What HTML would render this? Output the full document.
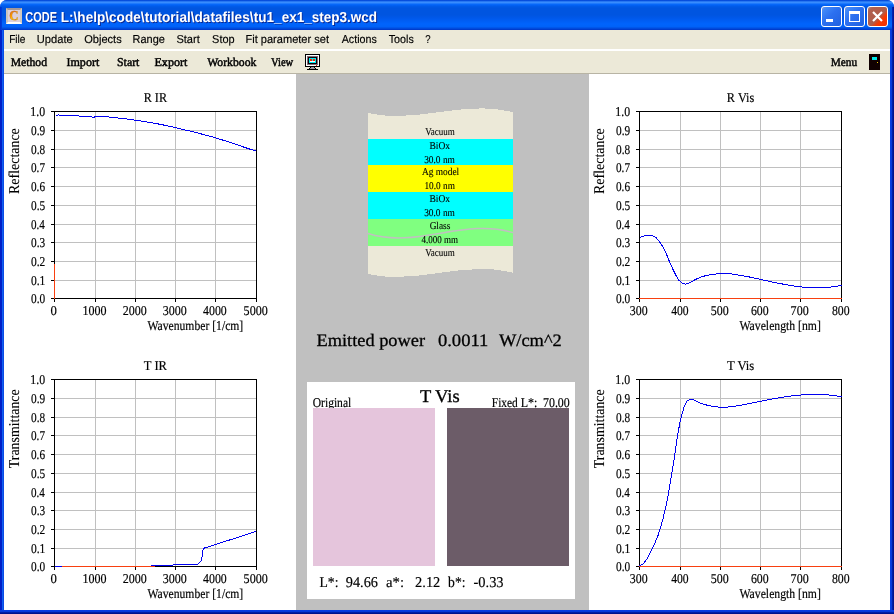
<!DOCTYPE html>
<html lang="en">
<head>
<meta charset="utf-8">
<title>CODE L:\help\code\tutorial\datafiles\tu1_ex1_step3.wcd</title>
<style>
html,body{margin:0;padding:0;}
body{width:894px;height:614px;overflow:hidden;background:#fff;position:relative;font-family:"Liberation Sans",sans-serif;}
#win{position:absolute;left:0;top:0;width:894px;height:614px;overflow:hidden;background:#0a3fe0;border-radius:7px 7px 0 0;}
#title{position:absolute;left:0;top:0;width:894px;height:30px;background:linear-gradient(to bottom,#0044d8 0px,#0a54e0 0.8px,#3c90ff 2px,#3488fc 3px,#0a6cfc 4px,#0262f6 5px,#005ae8 6.5px,#0055e0 8px,#0055e0 15px,#0058ea 18px,#005ef4 21px,#0064fc 24px,#0062f8 26.5px,#0052e4 28px,#0034c4 30px);}
#bl,#br{position:absolute;top:30px;width:4px;height:584px;}
#tl,#tr{position:absolute;top:7px;width:2px;height:23px;}
#tl{left:0;background:linear-gradient(to right,#0030d0,#0040dc);}
#tr{left:892px;background:linear-gradient(to right,#0428b8,#001490);}
#bl{left:0;background:linear-gradient(to right,#0020c8 0,#0020c8 1.5px,#1060f0 2.5px,#0840e0 4px);}
#br{left:890px;background:linear-gradient(to right,#0a3ee4 0,#0838d8 1.6px,#0420a8 2.4px,#000c80 4px);}
#bb{position:absolute;left:0;top:610px;width:894px;height:4px;background:linear-gradient(to bottom,#0a3ee4 0,#0838d8 1.6px,#0420a8 2.4px,#000c80 4px);}
#ticon{position:absolute;left:6px;top:8px;width:16px;height:16px;box-sizing:border-box;background:#dcd0dc;border:2px solid;border-color:#a49898 #d0c8c0 #fcfcfc #ccc4bc;}
.tb{position:absolute;top:6px;width:19px;height:19px;border:1px solid #fff;border-radius:3px;background:linear-gradient(135deg,#8098d8 0%,#4088f8 14%,#2c70f0 45%,#2060e0 100%);}
#bclose{background:linear-gradient(135deg,#a89088 0%,#b06050 14%,#b05c48 55%,#f83800 70%,#f03000 100%);}
.tb svg{position:absolute;left:-1px;top:-1px;}
#menubar{position:absolute;left:4px;top:30px;width:886px;height:19px;background:#ece9d8;}
#sep{position:absolute;left:4px;top:49px;width:886px;height:2px;background:#fff;}
#toolbar{position:absolute;left:4px;top:51px;width:886px;height:22px;background:#ece9d8;border-bottom:1px solid #b8b4a4;}
#content{position:absolute;left:4px;top:74px;width:886px;height:536px;background:#fff;}
#gray{position:absolute;left:296px;top:74px;width:293px;height:536px;background:#c0c0c0;}
#colorbox{position:absolute;left:307px;top:382px;width:268px;height:217px;background:#fff;}
.sw{position:absolute;top:408px;width:122px;height:158px;}
#ov{position:absolute;left:0;top:0;will-change:transform;}
.tt{text-shadow:1px 1px 0 #0a2890;}
</style>
</head>
<body>
<div id="win">
<div id="title"></div>
<div id="ticon"></div>
<div class="tb" id="bmin" style="left:821px"><svg width="21" height="21"><rect x="5" y="13" width="7" height="3" fill="#fff"/></svg></div>
<div class="tb" id="bmax" style="left:844px"><svg width="21" height="21"><path d="M5 5h11v11h-11z M6.200 8v7h8.800v-7z" fill="#fff" fill-rule="evenodd"/></svg></div>
<div class="tb" id="bclose" style="left:867px"><svg width="21" height="21"><path d="M6 6 L15 15 M15 6 L6 15" stroke="#fff" stroke-width="2.200" fill="none"/></svg></div>
<div id="tl"></div><div id="tr"></div><div id="bl"></div><div id="br"></div><div id="bb"></div>
<div id="menubar"></div>
<div id="sep"></div>
<div id="toolbar"></div>
<div id="content"></div>
<div id="gray"></div>
<div id="colorbox"></div>
<svg id="ov" width="894" height="614" viewBox="0 0 894 614" text-rendering="geometricPrecision">
<defs><linearGradient id="cg" x1="0" y1="0" x2="1" y2="1"><stop offset="0" stop-color="#b84820"/><stop offset="0.35" stop-color="#ffa000"/><stop offset="0.6" stop-color="#ffff00"/><stop offset="1" stop-color="#fff000"/></linearGradient></defs>
<text transform="translate(9.300,20.300) scale(0.95,1)" font-family="'Liberation Serif', serif" font-weight="bold" font-size="13.5px" fill="url(#cg)" stroke="#c86020" stroke-width="0.400">C</text>
<text transform="translate(25.36,22) scale(0.7559,1)" font-family="'Liberation Sans', sans-serif" font-weight="bold" font-size="14.5px" fill="#fff" xml:space="preserve" class="tt">CODE </text><text transform="translate(60.78,22) scale(0.9365,1)" font-family="'Liberation Sans', sans-serif" font-weight="bold" font-size="14.5px" fill="#fff" xml:space="preserve" class="tt">L:\help\code\</text><text transform="translate(144.63,22) scale(0.9386,1)" font-family="'Liberation Sans', sans-serif" font-weight="bold" font-size="14.5px" fill="#fff" xml:space="preserve" class="tt">tutorial\datafiles\</text><text transform="translate(253.83,22) scale(0.9325,1)" font-family="'Liberation Sans', sans-serif" font-weight="bold" font-size="14.5px" fill="#fff" xml:space="preserve" class="tt">tu1_ex1_step3.wcd</text>
<g id="menu"><text transform="translate(9.17,43) scale(0.8783,1)" font-family="'Liberation Sans', sans-serif" font-weight="normal" font-size="11.5px" fill="#000" stroke="#000" stroke-width="0.15" xml:space="preserve">File </text><text transform="translate(36.74,43) scale(0.9698,1)" font-family="'Liberation Sans', sans-serif" font-weight="normal" font-size="11.5px" fill="#000" stroke="#000" stroke-width="0.15" xml:space="preserve">Update </text><text transform="translate(84.17,43) scale(0.9622,1)" font-family="'Liberation Sans', sans-serif" font-weight="normal" font-size="11.5px" fill="#000" stroke="#000" stroke-width="0.15" xml:space="preserve">Objects </text><text transform="translate(132.60,43) scale(0.9528,1)" font-family="'Liberation Sans', sans-serif" font-weight="normal" font-size="11.5px" fill="#000" stroke="#000" stroke-width="0.15" xml:space="preserve">Range </text><text transform="translate(176.40,43) scale(0.9624,1)" font-family="'Liberation Sans', sans-serif" font-weight="normal" font-size="11.5px" fill="#000" stroke="#000" stroke-width="0.15" xml:space="preserve">Start </text><text transform="translate(212.11,43) scale(0.9490,1)" font-family="'Liberation Sans', sans-serif" font-weight="normal" font-size="11.5px" fill="#000" stroke="#000" stroke-width="0.15" xml:space="preserve">Stop </text><text transform="translate(245.49,43) scale(0.9607,1)" font-family="'Liberation Sans', sans-serif" font-weight="normal" font-size="11.5px" fill="#000" stroke="#000" stroke-width="0.15" xml:space="preserve">Fit parameter set </text><text transform="translate(341.67,43) scale(0.9306,1)" font-family="'Liberation Sans', sans-serif" font-weight="normal" font-size="11.5px" fill="#000" stroke="#000" stroke-width="0.15" xml:space="preserve">Actions </text><text transform="translate(388.76,43) scale(0.9316,1)" font-family="'Liberation Sans', sans-serif" font-weight="normal" font-size="11.5px" fill="#000" stroke="#000" stroke-width="0.15" xml:space="preserve">Tools </text><text transform="translate(425.22,43) scale(0.8333,1)" font-family="'Liberation Sans', sans-serif" font-weight="normal" font-size="11.5px" fill="#000" stroke="#000" stroke-width="0.15" xml:space="preserve">? </text></g>
<g id="tools"><text transform="translate(10.68,66) scale(0.9745,1)" font-family="'Liberation Serif', serif" font-weight="normal" font-size="12px" fill="#000" stroke="#000" stroke-width="0.45" xml:space="preserve">Method </text><text transform="translate(66.48,66) scale(1.0034,1)" font-family="'Liberation Serif', serif" font-weight="normal" font-size="12px" fill="#000" stroke="#000" stroke-width="0.45" xml:space="preserve">Import </text><text transform="translate(117.00,66) scale(0.9871,1)" font-family="'Liberation Serif', serif" font-weight="normal" font-size="12px" fill="#000" stroke="#000" stroke-width="0.45" xml:space="preserve">Start </text><text transform="translate(154.47,66) scale(1.0099,1)" font-family="'Liberation Serif', serif" font-weight="normal" font-size="12px" fill="#000" stroke="#000" stroke-width="0.45" xml:space="preserve">Export </text><text transform="translate(207.20,66) scale(0.9768,1)" font-family="'Liberation Serif', serif" font-weight="normal" font-size="12px" fill="#000" stroke="#000" stroke-width="0.45" xml:space="preserve">Workbook </text><text transform="translate(270.99,66) scale(0.8801,1)" font-family="'Liberation Serif', serif" font-weight="normal" font-size="12px" fill="#000" stroke="#000" stroke-width="0.45" xml:space="preserve">View </text><text transform="translate(830.69,66) scale(0.9472,1)" font-family="'Liberation Serif', serif" font-weight="normal" font-size="12px" fill="#000" stroke="#000" stroke-width="0.45" xml:space="preserve">Menu </text></g>
<g shape-rendering="crispEdges">
<rect x="305" y="54" width="15" height="13" fill="#000"/>
<rect x="306" y="55" width="13" height="11" fill="#fff"/>
<rect x="307" y="56" width="11" height="9" fill="#807078"/>
<rect x="308" y="57" width="9" height="7" fill="#100008"/>
<rect x="309" y="58" width="7" height="5" fill="#00f0f0"/>
<rect x="310" y="59" width="2" height="2" fill="#ff2000"/><rect x="313" y="59" width="2" height="2" fill="#ff2000"/>
<rect x="310" y="61" width="5" height="1" fill="#fff"/>
<rect x="307" y="65" width="11" height="1" fill="#fff"/>
<rect x="316" y="65" width="1" height="1" fill="#ff2000"/>
<rect x="310" y="67" width="5" height="1" fill="#000"/><rect x="311" y="67" width="3" height="1" fill="#a098a0"/>
<rect x="309" y="68" width="7" height="1" fill="#000"/><rect x="310" y="68" width="5" height="1" fill="#a098a0"/>
<rect x="307" y="69" width="11" height="1" fill="#000"/>
<rect x="869" y="54" width="11" height="16" fill="#100000"/>
<rect x="872" y="57" width="5" height="3" fill="#00e8e8"/>
<rect x="877" y="62" width="1" height="1" fill="#e8c800"/>
</g>
<g shape-rendering="crispEdges">
<path d="M368 113 C416.300 124.500 464.700 99 513 112.300 V139 H368 Z" fill="#ece9d8"/>
<rect x="368" y="139" width="145" height="26" fill="#00ffff"/>
<rect x="368" y="165" width="145" height="27" fill="#ffff00"/>
<rect x="368" y="192" width="145" height="27" fill="#00ffff"/>
<rect x="368" y="219" width="145" height="27" fill="#80ff80"/>
<path d="M368 246 H513 V272.800 C464.700 259.500 416.300 285.500 368 274 Z" fill="#ece9d8"/>
</g>
<path d="M368 233.500 C416.300 249 464.700 217.500 513 232.600" fill="none" stroke="#c0c0c0" stroke-width="1.500"/>
<g id="layers"><text transform="translate(425.21,135) scale(0.8550,1)" font-family="'Liberation Serif', serif" font-weight="normal" font-size="10.5px" fill="#000" stroke="#000" stroke-width="0.1" xml:space="preserve">Vacuum</text><text transform="translate(429.54,149) scale(0.9043,1)" font-family="'Liberation Serif', serif" font-weight="normal" font-size="10.5px" fill="#000" stroke="#000" stroke-width="0.1" xml:space="preserve">BiOx</text><text transform="translate(424.16,163) scale(0.8917,1)" font-family="'Liberation Serif', serif" font-weight="normal" font-size="10.5px" fill="#000" stroke="#000" stroke-width="0.1" xml:space="preserve">30.0 nm</text><text transform="translate(421.91,175) scale(0.8938,1)" font-family="'Liberation Serif', serif" font-weight="normal" font-size="10.5px" fill="#000" stroke="#000" stroke-width="0.1" xml:space="preserve">Ag model</text><text transform="translate(424.49,189) scale(0.8819,1)" font-family="'Liberation Serif', serif" font-weight="normal" font-size="10.5px" fill="#000" stroke="#000" stroke-width="0.1" xml:space="preserve">10.0 nm</text><text transform="translate(429.54,202) scale(0.9043,1)" font-family="'Liberation Serif', serif" font-weight="normal" font-size="10.5px" fill="#000" stroke="#000" stroke-width="0.1" xml:space="preserve">BiOx</text><text transform="translate(424.16,216) scale(0.8917,1)" font-family="'Liberation Serif', serif" font-weight="normal" font-size="10.5px" fill="#000" stroke="#000" stroke-width="0.1" xml:space="preserve">30.0 nm</text><text transform="translate(429.63,229) scale(0.8880,1)" font-family="'Liberation Serif', serif" font-weight="normal" font-size="10.5px" fill="#000" stroke="#000" stroke-width="0.1" xml:space="preserve">Glass</text><text transform="translate(421.52,243) scale(0.8576,1)" font-family="'Liberation Serif', serif" font-weight="normal" font-size="10.5px" fill="#000" stroke="#000" stroke-width="0.1" xml:space="preserve">4.000 mm</text><text transform="translate(425.21,256) scale(0.8550,1)" font-family="'Liberation Serif', serif" font-weight="normal" font-size="10.5px" fill="#000" stroke="#000" stroke-width="0.1" xml:space="preserve">Vacuum</text></g>
<g id="center"><text transform="translate(316.50,345.7) scale(1.0486,1)" font-family="'Liberation Serif', serif" font-weight="normal" font-size="17.5px" fill="#000" stroke="#000" stroke-width="0.3" xml:space="preserve">Emitted power   </text><text transform="translate(437.90,345.7) scale(1.0620,1)" font-family="'Liberation Serif', serif" font-weight="normal" font-size="17.5px" fill="#000" stroke="#000" stroke-width="0.3" xml:space="preserve">0.0011   </text><text transform="translate(498.90,345.7) scale(1.0535,1)" font-family="'Liberation Serif', serif" font-weight="normal" font-size="17.5px" fill="#000" stroke="#000" stroke-width="0.3" xml:space="preserve">W/cm^2</text><text transform="translate(419.88,402) scale(1.0265,1)" font-family="'Liberation Serif', serif" font-weight="normal" font-size="18px" fill="#000" stroke="#000" stroke-width="0.3" xml:space="preserve">T Vis</text><text transform="translate(312.74,407) scale(0.8556,1)" font-family="'Liberation Serif', serif" font-weight="normal" font-size="13.5px" fill="#000" stroke="#000" stroke-width="0.18" xml:space="preserve">Original</text><text transform="translate(491.79,407) scale(0.8442,1)" font-family="'Liberation Serif', serif" font-weight="normal" font-size="13.5px" fill="#000" stroke="#000" stroke-width="0.18" xml:space="preserve">Fixed </text><text transform="translate(520.67,407) scale(0.8912,1)" font-family="'Liberation Serif', serif" font-weight="normal" font-size="13.5px" fill="#000" stroke="#000" stroke-width="0.18" xml:space="preserve">L*:  </text><text transform="translate(543.03,407) scale(0.8796,1)" font-family="'Liberation Serif', serif" font-weight="normal" font-size="13.5px" fill="#000" stroke="#000" stroke-width="0.18" xml:space="preserve">70.00</text><text transform="translate(319.52,587) scale(0.9115,1)" font-family="'Liberation Serif', serif" font-weight="normal" font-size="15px" fill="#000" stroke="#000" stroke-width="0.18" xml:space="preserve">L*:  </text><text transform="translate(345.84,587) scale(0.9509,1)" font-family="'Liberation Serif', serif" font-weight="normal" font-size="15px" fill="#000" stroke="#000" stroke-width="0.18" xml:space="preserve">94.66  </text><text transform="translate(386.08,587) scale(0.9812,1)" font-family="'Liberation Serif', serif" font-weight="normal" font-size="15px" fill="#000" stroke="#000" stroke-width="0.18" xml:space="preserve">a*:   </text><text transform="translate(415.09,587) scale(0.9602,1)" font-family="'Liberation Serif', serif" font-weight="normal" font-size="15px" fill="#000" stroke="#000" stroke-width="0.18" xml:space="preserve">2.12  </text><text transform="translate(448.10,587) scale(0.9074,1)" font-family="'Liberation Serif', serif" font-weight="normal" font-size="15px" fill="#000" stroke="#000" stroke-width="0.18" xml:space="preserve">b*:  </text><text transform="translate(473.46,587) scale(0.9643,1)" font-family="'Liberation Serif', serif" font-weight="normal" font-size="15px" fill="#000" stroke="#000" stroke-width="0.18" xml:space="preserve">-0.33</text></g>
<g shape-rendering="crispEdges"><rect x="313" y="408" width="122" height="158" fill="#e5c5dc"/><rect x="447" y="408" width="122" height="158" fill="#6c5c68"/></g>
<g fill="#c0c0c0" shape-rendering="crispEdges"><rect x="95" y="112" width="1" height="186"/><rect x="135" y="112" width="1" height="186"/><rect x="175" y="112" width="1" height="186"/><rect x="215" y="112" width="1" height="186"/><rect x="55" y="280" width="201" height="1"/><rect x="55" y="261" width="201" height="1"/><rect x="55" y="242" width="201" height="1"/><rect x="55" y="224" width="201" height="1"/><rect x="55" y="205" width="201" height="1"/><rect x="55" y="186" width="201" height="1"/><rect x="55" y="167" width="201" height="1"/><rect x="55" y="149" width="201" height="1"/><rect x="55" y="130" width="201" height="1"/></g>
<g fill="#000" shape-rendering="crispEdges"><path d="M54 111h203v188h-203z M55 112v186h201v-186z" fill-rule="evenodd"/><rect x="54" y="299" width="1" height="3"/><rect x="95" y="299" width="1" height="3"/><rect x="135" y="299" width="1" height="3"/><rect x="175" y="299" width="1" height="3"/><rect x="215" y="299" width="1" height="3"/><rect x="256" y="299" width="1" height="3"/><rect x="51" y="298" width="3" height="1"/><rect x="51" y="280" width="3" height="1"/><rect x="51" y="261" width="3" height="1"/><rect x="51" y="242" width="3" height="1"/><rect x="51" y="224" width="3" height="1"/><rect x="51" y="205" width="3" height="1"/><rect x="51" y="186" width="3" height="1"/><rect x="51" y="167" width="3" height="1"/><rect x="51" y="149" width="3" height="1"/><rect x="51" y="130" width="3" height="1"/><rect x="51" y="111" width="3" height="1"/></g>
<polyline fill="none" stroke="#f84010" stroke-width="1" stroke-linejoin="round" shape-rendering="crispEdges" points="54.5,264.0 54.5,298.5"/>
<polyline fill="none" stroke="#0000f0" stroke-width="1" stroke-linejoin="round" shape-rendering="crispEdges" points="56.0,115.5 57.5,115.3 58.6,114.5 59.6,115.3 61.0,115.6 78.5,115.7 80.0,116.4 91.0,116.5 92.3,117.4 94.0,117.4 95.3,116.5 105.0,116.6 115.0,117.6 125.0,118.8 135.0,120.1 145.0,121.6 155.0,123.3 165.0,125.3 175.0,127.5 185.0,129.9 195.0,132.3 205.0,134.9 215.5,137.8 225.0,140.8 235.0,144.1 245.0,147.5 256.3,151.2"/>
<g><text transform="translate(50.62,314.8) scale(0.9412,1)" font-family="'Liberation Serif', serif" font-weight="normal" font-size="13.5px" fill="#000" stroke="#000" stroke-width="0.18" xml:space="preserve">0</text><text transform="translate(82.45,314.8) scale(0.8928,1)" font-family="'Liberation Serif', serif" font-weight="normal" font-size="13.5px" fill="#000" stroke="#000" stroke-width="0.18" xml:space="preserve">1000</text><text transform="translate(122.79,314.8) scale(0.8873,1)" font-family="'Liberation Serif', serif" font-weight="normal" font-size="13.5px" fill="#000" stroke="#000" stroke-width="0.18" xml:space="preserve">2000</text><text transform="translate(162.73,314.8) scale(0.8897,1)" font-family="'Liberation Serif', serif" font-weight="normal" font-size="13.5px" fill="#000" stroke="#000" stroke-width="0.18" xml:space="preserve">3000</text><text transform="translate(203.06,314.8) scale(0.8771,1)" font-family="'Liberation Serif', serif" font-weight="normal" font-size="13.5px" fill="#000" stroke="#000" stroke-width="0.18" xml:space="preserve">4000</text><text transform="translate(243.61,314.8) scale(0.8943,1)" font-family="'Liberation Serif', serif" font-weight="normal" font-size="13.5px" fill="#000" stroke="#000" stroke-width="0.18" xml:space="preserve">5000</text><text transform="translate(30.98,302.7) scale(0.8385,1)" font-family="'Liberation Serif', serif" font-weight="normal" font-size="13.5px" fill="#000" stroke="#000" stroke-width="0.18" xml:space="preserve">0.0</text><text transform="translate(30.97,284.7) scale(0.8548,1)" font-family="'Liberation Serif', serif" font-weight="normal" font-size="13.5px" fill="#000" stroke="#000" stroke-width="0.18" xml:space="preserve">0.1</text><text transform="translate(30.97,265.7) scale(0.8511,1)" font-family="'Liberation Serif', serif" font-weight="normal" font-size="13.5px" fill="#000" stroke="#000" stroke-width="0.18" xml:space="preserve">0.2</text><text transform="translate(30.97,246.7) scale(0.8402,1)" font-family="'Liberation Serif', serif" font-weight="normal" font-size="13.5px" fill="#000" stroke="#000" stroke-width="0.18" xml:space="preserve">0.3</text><text transform="translate(30.98,228.7) scale(0.8227,1)" font-family="'Liberation Serif', serif" font-weight="normal" font-size="13.5px" fill="#000" stroke="#000" stroke-width="0.18" xml:space="preserve">0.4</text><text transform="translate(30.97,209.7) scale(0.8402,1)" font-family="'Liberation Serif', serif" font-weight="normal" font-size="13.5px" fill="#000" stroke="#000" stroke-width="0.18" xml:space="preserve">0.5</text><text transform="translate(30.98,190.7) scale(0.8331,1)" font-family="'Liberation Serif', serif" font-weight="normal" font-size="13.5px" fill="#000" stroke="#000" stroke-width="0.18" xml:space="preserve">0.6</text><text transform="translate(30.98,171.7) scale(0.8314,1)" font-family="'Liberation Serif', serif" font-weight="normal" font-size="13.5px" fill="#000" stroke="#000" stroke-width="0.18" xml:space="preserve">0.7</text><text transform="translate(30.98,153.7) scale(0.8385,1)" font-family="'Liberation Serif', serif" font-weight="normal" font-size="13.5px" fill="#000" stroke="#000" stroke-width="0.18" xml:space="preserve">0.8</text><text transform="translate(30.97,134.7) scale(0.8402,1)" font-family="'Liberation Serif', serif" font-weight="normal" font-size="13.5px" fill="#000" stroke="#000" stroke-width="0.18" xml:space="preserve">0.9</text><text transform="translate(30.37,115.7) scale(0.8757,1)" font-family="'Liberation Serif', serif" font-weight="normal" font-size="13.5px" fill="#000" stroke="#000" stroke-width="0.18" xml:space="preserve">1.0</text><text transform="translate(147.50,330) scale(0.8625,1)" font-family="'Liberation Serif', serif" font-weight="normal" font-size="13.5px" fill="#000" stroke="#000" stroke-width="0.18" xml:space="preserve">Wavenumber [1/cm]</text><text transform="translate(143.66,102) scale(0.9026,1)" font-family="'Liberation Serif', serif" font-weight="normal" font-size="13.5px" fill="#000" stroke="#000" stroke-width="0.18" xml:space="preserve">R IR</text><text transform="translate(19.4,193.98) rotate(-90) scale(0.9290,1)" font-family="'Liberation Serif', serif" font-size="15px" fill="#000" stroke="#000" stroke-width="0.1">Reflectance</text></g>
<g fill="#c0c0c0" shape-rendering="crispEdges"><rect x="95" y="380" width="1" height="186"/><rect x="135" y="380" width="1" height="186"/><rect x="175" y="380" width="1" height="186"/><rect x="215" y="380" width="1" height="186"/><rect x="55" y="548" width="201" height="1"/><rect x="55" y="529" width="201" height="1"/><rect x="55" y="510" width="201" height="1"/><rect x="55" y="492" width="201" height="1"/><rect x="55" y="473" width="201" height="1"/><rect x="55" y="454" width="201" height="1"/><rect x="55" y="435" width="201" height="1"/><rect x="55" y="417" width="201" height="1"/><rect x="55" y="398" width="201" height="1"/></g>
<g fill="#000" shape-rendering="crispEdges"><path d="M54 379h203v188h-203z M55 380v186h201v-186z" fill-rule="evenodd"/><rect x="54" y="567" width="1" height="3"/><rect x="95" y="567" width="1" height="3"/><rect x="135" y="567" width="1" height="3"/><rect x="175" y="567" width="1" height="3"/><rect x="215" y="567" width="1" height="3"/><rect x="256" y="567" width="1" height="3"/><rect x="51" y="566" width="3" height="1"/><rect x="51" y="548" width="3" height="1"/><rect x="51" y="529" width="3" height="1"/><rect x="51" y="510" width="3" height="1"/><rect x="51" y="492" width="3" height="1"/><rect x="51" y="473" width="3" height="1"/><rect x="51" y="454" width="3" height="1"/><rect x="51" y="435" width="3" height="1"/><rect x="51" y="417" width="3" height="1"/><rect x="51" y="398" width="3" height="1"/><rect x="51" y="379" width="3" height="1"/></g>
<polyline fill="none" stroke="#f84010" stroke-width="1" stroke-linejoin="round" shape-rendering="crispEdges" points="62.0,566.5 154.5,566.5"/>
<polyline fill="none" stroke="#0000f0" stroke-width="1" stroke-linejoin="round" shape-rendering="crispEdges" points="55.0,566.5 62.0,566.5"/>
<polyline fill="none" stroke="#0000f0" stroke-width="1" stroke-linejoin="round" shape-rendering="crispEdges" points="151.0,565.5 172.5,565.5 173.5,564.5 197.5,564.5 199.7,562.5 201.5,560.8 202.2,555.5 203.1,549.0 204.6,548.0 256.3,531.4"/>
<g><text transform="translate(50.62,582.8) scale(0.9412,1)" font-family="'Liberation Serif', serif" font-weight="normal" font-size="13.5px" fill="#000" stroke="#000" stroke-width="0.18" xml:space="preserve">0</text><text transform="translate(82.45,582.8) scale(0.8928,1)" font-family="'Liberation Serif', serif" font-weight="normal" font-size="13.5px" fill="#000" stroke="#000" stroke-width="0.18" xml:space="preserve">1000</text><text transform="translate(122.79,582.8) scale(0.8873,1)" font-family="'Liberation Serif', serif" font-weight="normal" font-size="13.5px" fill="#000" stroke="#000" stroke-width="0.18" xml:space="preserve">2000</text><text transform="translate(162.73,582.8) scale(0.8897,1)" font-family="'Liberation Serif', serif" font-weight="normal" font-size="13.5px" fill="#000" stroke="#000" stroke-width="0.18" xml:space="preserve">3000</text><text transform="translate(203.06,582.8) scale(0.8771,1)" font-family="'Liberation Serif', serif" font-weight="normal" font-size="13.5px" fill="#000" stroke="#000" stroke-width="0.18" xml:space="preserve">4000</text><text transform="translate(243.61,582.8) scale(0.8943,1)" font-family="'Liberation Serif', serif" font-weight="normal" font-size="13.5px" fill="#000" stroke="#000" stroke-width="0.18" xml:space="preserve">5000</text><text transform="translate(30.98,570.7) scale(0.8385,1)" font-family="'Liberation Serif', serif" font-weight="normal" font-size="13.5px" fill="#000" stroke="#000" stroke-width="0.18" xml:space="preserve">0.0</text><text transform="translate(30.97,552.7) scale(0.8548,1)" font-family="'Liberation Serif', serif" font-weight="normal" font-size="13.5px" fill="#000" stroke="#000" stroke-width="0.18" xml:space="preserve">0.1</text><text transform="translate(30.97,533.7) scale(0.8511,1)" font-family="'Liberation Serif', serif" font-weight="normal" font-size="13.5px" fill="#000" stroke="#000" stroke-width="0.18" xml:space="preserve">0.2</text><text transform="translate(30.97,514.7) scale(0.8402,1)" font-family="'Liberation Serif', serif" font-weight="normal" font-size="13.5px" fill="#000" stroke="#000" stroke-width="0.18" xml:space="preserve">0.3</text><text transform="translate(30.98,496.7) scale(0.8227,1)" font-family="'Liberation Serif', serif" font-weight="normal" font-size="13.5px" fill="#000" stroke="#000" stroke-width="0.18" xml:space="preserve">0.4</text><text transform="translate(30.97,477.7) scale(0.8402,1)" font-family="'Liberation Serif', serif" font-weight="normal" font-size="13.5px" fill="#000" stroke="#000" stroke-width="0.18" xml:space="preserve">0.5</text><text transform="translate(30.98,458.7) scale(0.8331,1)" font-family="'Liberation Serif', serif" font-weight="normal" font-size="13.5px" fill="#000" stroke="#000" stroke-width="0.18" xml:space="preserve">0.6</text><text transform="translate(30.98,439.7) scale(0.8314,1)" font-family="'Liberation Serif', serif" font-weight="normal" font-size="13.5px" fill="#000" stroke="#000" stroke-width="0.18" xml:space="preserve">0.7</text><text transform="translate(30.98,421.7) scale(0.8385,1)" font-family="'Liberation Serif', serif" font-weight="normal" font-size="13.5px" fill="#000" stroke="#000" stroke-width="0.18" xml:space="preserve">0.8</text><text transform="translate(30.97,402.7) scale(0.8402,1)" font-family="'Liberation Serif', serif" font-weight="normal" font-size="13.5px" fill="#000" stroke="#000" stroke-width="0.18" xml:space="preserve">0.9</text><text transform="translate(30.37,383.7) scale(0.8757,1)" font-family="'Liberation Serif', serif" font-weight="normal" font-size="13.5px" fill="#000" stroke="#000" stroke-width="0.18" xml:space="preserve">1.0</text><text transform="translate(147.50,598) scale(0.8625,1)" font-family="'Liberation Serif', serif" font-weight="normal" font-size="13.5px" fill="#000" stroke="#000" stroke-width="0.18" xml:space="preserve">Wavenumber [1/cm]</text><text transform="translate(143.78,370) scale(0.9348,1)" font-family="'Liberation Serif', serif" font-weight="normal" font-size="13.5px" fill="#000" stroke="#000" stroke-width="0.18" xml:space="preserve">T IR</text><text transform="translate(19.4,468.24) rotate(-90) scale(0.9256,1)" font-family="'Liberation Serif', serif" font-size="15px" fill="#000" stroke="#000" stroke-width="0.1">Transmittance</text></g>
<g fill="#c0c0c0" shape-rendering="crispEdges"><rect x="680" y="112" width="1" height="186"/><rect x="720" y="112" width="1" height="186"/><rect x="760" y="112" width="1" height="186"/><rect x="800" y="112" width="1" height="186"/><rect x="640" y="280" width="201" height="1"/><rect x="640" y="261" width="201" height="1"/><rect x="640" y="242" width="201" height="1"/><rect x="640" y="224" width="201" height="1"/><rect x="640" y="205" width="201" height="1"/><rect x="640" y="186" width="201" height="1"/><rect x="640" y="167" width="201" height="1"/><rect x="640" y="149" width="201" height="1"/><rect x="640" y="130" width="201" height="1"/></g>
<g fill="#000" shape-rendering="crispEdges"><path d="M639 111h203v188h-203z M640 112v186h201v-186z" fill-rule="evenodd"/><rect x="639" y="299" width="1" height="3"/><rect x="680" y="299" width="1" height="3"/><rect x="720" y="299" width="1" height="3"/><rect x="760" y="299" width="1" height="3"/><rect x="800" y="299" width="1" height="3"/><rect x="841" y="299" width="1" height="3"/><rect x="636" y="298" width="3" height="1"/><rect x="636" y="280" width="3" height="1"/><rect x="636" y="261" width="3" height="1"/><rect x="636" y="242" width="3" height="1"/><rect x="636" y="224" width="3" height="1"/><rect x="636" y="205" width="3" height="1"/><rect x="636" y="186" width="3" height="1"/><rect x="636" y="167" width="3" height="1"/><rect x="636" y="149" width="3" height="1"/><rect x="636" y="130" width="3" height="1"/><rect x="636" y="111" width="3" height="1"/></g>
<polyline fill="none" stroke="#f84010" stroke-width="1" stroke-linejoin="round" shape-rendering="crispEdges" points="639.0,298.5 842.0,298.5"/>
<polyline fill="none" stroke="#0000f0" stroke-width="1" stroke-linejoin="round" shape-rendering="crispEdges" points="639.7,237.6 642.5,236.4 645.6,235.6 651.4,235.6 654.0,236.4 656.0,237.6 660.8,243.5 665.5,251.7 670.2,263.5 675.0,273.6 678.5,279.9 682.0,283.0 685.5,284.1 689.0,283.0 696.0,279.2 702.0,276.6 710.0,274.7 719.6,273.6 729.0,273.6 738.4,275.0 750.0,277.1 760.7,279.4 771.0,281.8 783.0,284.1 794.7,286.2 804.0,287.3 816.0,287.7 827.6,287.4 834.7,286.5 841.7,285.5"/>
<g><text transform="translate(629.84,314.8) scale(0.8795,1)" font-family="'Liberation Serif', serif" font-weight="normal" font-size="13.5px" fill="#000" stroke="#000" stroke-width="0.18" xml:space="preserve">300</text><text transform="translate(671.17,314.8) scale(0.8627,1)" font-family="'Liberation Serif', serif" font-weight="normal" font-size="13.5px" fill="#000" stroke="#000" stroke-width="0.18" xml:space="preserve">400</text><text transform="translate(710.71,314.8) scale(0.8857,1)" font-family="'Liberation Serif', serif" font-weight="normal" font-size="13.5px" fill="#000" stroke="#000" stroke-width="0.18" xml:space="preserve">500</text><text transform="translate(750.90,314.8) scale(0.8764,1)" font-family="'Liberation Serif', serif" font-weight="normal" font-size="13.5px" fill="#000" stroke="#000" stroke-width="0.18" xml:space="preserve">600</text><text transform="translate(790.62,314.8) scale(0.8905,1)" font-family="'Liberation Serif', serif" font-weight="normal" font-size="13.5px" fill="#000" stroke="#000" stroke-width="0.18" xml:space="preserve">700</text><text transform="translate(831.96,314.8) scale(0.8733,1)" font-family="'Liberation Serif', serif" font-weight="normal" font-size="13.5px" fill="#000" stroke="#000" stroke-width="0.18" xml:space="preserve">800</text><text transform="translate(615.98,302.7) scale(0.8385,1)" font-family="'Liberation Serif', serif" font-weight="normal" font-size="13.5px" fill="#000" stroke="#000" stroke-width="0.18" xml:space="preserve">0.0</text><text transform="translate(615.97,284.7) scale(0.8548,1)" font-family="'Liberation Serif', serif" font-weight="normal" font-size="13.5px" fill="#000" stroke="#000" stroke-width="0.18" xml:space="preserve">0.1</text><text transform="translate(615.97,265.7) scale(0.8511,1)" font-family="'Liberation Serif', serif" font-weight="normal" font-size="13.5px" fill="#000" stroke="#000" stroke-width="0.18" xml:space="preserve">0.2</text><text transform="translate(615.97,246.7) scale(0.8402,1)" font-family="'Liberation Serif', serif" font-weight="normal" font-size="13.5px" fill="#000" stroke="#000" stroke-width="0.18" xml:space="preserve">0.3</text><text transform="translate(615.98,228.7) scale(0.8227,1)" font-family="'Liberation Serif', serif" font-weight="normal" font-size="13.5px" fill="#000" stroke="#000" stroke-width="0.18" xml:space="preserve">0.4</text><text transform="translate(615.97,209.7) scale(0.8402,1)" font-family="'Liberation Serif', serif" font-weight="normal" font-size="13.5px" fill="#000" stroke="#000" stroke-width="0.18" xml:space="preserve">0.5</text><text transform="translate(615.98,190.7) scale(0.8331,1)" font-family="'Liberation Serif', serif" font-weight="normal" font-size="13.5px" fill="#000" stroke="#000" stroke-width="0.18" xml:space="preserve">0.6</text><text transform="translate(615.98,171.7) scale(0.8314,1)" font-family="'Liberation Serif', serif" font-weight="normal" font-size="13.5px" fill="#000" stroke="#000" stroke-width="0.18" xml:space="preserve">0.7</text><text transform="translate(615.98,153.7) scale(0.8385,1)" font-family="'Liberation Serif', serif" font-weight="normal" font-size="13.5px" fill="#000" stroke="#000" stroke-width="0.18" xml:space="preserve">0.8</text><text transform="translate(615.97,134.7) scale(0.8402,1)" font-family="'Liberation Serif', serif" font-weight="normal" font-size="13.5px" fill="#000" stroke="#000" stroke-width="0.18" xml:space="preserve">0.9</text><text transform="translate(615.37,115.7) scale(0.8757,1)" font-family="'Liberation Serif', serif" font-weight="normal" font-size="13.5px" fill="#000" stroke="#000" stroke-width="0.18" xml:space="preserve">1.0</text><text transform="translate(739.50,330) scale(0.8677,1)" font-family="'Liberation Serif', serif" font-weight="normal" font-size="13.5px" fill="#000" stroke="#000" stroke-width="0.18" xml:space="preserve">Wavelength [nm]</text><text transform="translate(726.86,102) scale(0.9101,1)" font-family="'Liberation Serif', serif" font-weight="normal" font-size="13.5px" fill="#000" stroke="#000" stroke-width="0.18" xml:space="preserve">R Vis</text><text transform="translate(604.4,193.98) rotate(-90) scale(0.9290,1)" font-family="'Liberation Serif', serif" font-size="15px" fill="#000" stroke="#000" stroke-width="0.1">Reflectance</text></g>
<g fill="#c0c0c0" shape-rendering="crispEdges"><rect x="680" y="380" width="1" height="186"/><rect x="720" y="380" width="1" height="186"/><rect x="760" y="380" width="1" height="186"/><rect x="800" y="380" width="1" height="186"/><rect x="640" y="548" width="201" height="1"/><rect x="640" y="529" width="201" height="1"/><rect x="640" y="510" width="201" height="1"/><rect x="640" y="492" width="201" height="1"/><rect x="640" y="473" width="201" height="1"/><rect x="640" y="454" width="201" height="1"/><rect x="640" y="435" width="201" height="1"/><rect x="640" y="417" width="201" height="1"/><rect x="640" y="398" width="201" height="1"/></g>
<g fill="#000" shape-rendering="crispEdges"><path d="M639 379h203v188h-203z M640 380v186h201v-186z" fill-rule="evenodd"/><rect x="639" y="567" width="1" height="3"/><rect x="680" y="567" width="1" height="3"/><rect x="720" y="567" width="1" height="3"/><rect x="760" y="567" width="1" height="3"/><rect x="800" y="567" width="1" height="3"/><rect x="841" y="567" width="1" height="3"/><rect x="636" y="566" width="3" height="1"/><rect x="636" y="548" width="3" height="1"/><rect x="636" y="529" width="3" height="1"/><rect x="636" y="510" width="3" height="1"/><rect x="636" y="492" width="3" height="1"/><rect x="636" y="473" width="3" height="1"/><rect x="636" y="454" width="3" height="1"/><rect x="636" y="435" width="3" height="1"/><rect x="636" y="417" width="3" height="1"/><rect x="636" y="398" width="3" height="1"/><rect x="636" y="379" width="3" height="1"/></g>
<polyline fill="none" stroke="#f84010" stroke-width="1" stroke-linejoin="round" shape-rendering="crispEdges" points="639.0,566.5 842.0,566.5"/>
<polyline fill="none" stroke="#0000f0" stroke-width="1" stroke-linejoin="round" shape-rendering="crispEdges" points="639.6,565.9 643.1,563.9 648.0,557.4 652.9,547.6 657.8,536.2 662.7,520.0 667.6,498.8 670.8,479.2 674.1,459.7 677.3,436.9 680.6,419.0 683.9,407.6 687.1,401.0 690.4,399.1 693.6,399.8 700.1,403.0 708.3,405.6 716.4,406.9 722.9,407.5 732.7,406.6 745.7,404.3 758.8,401.7 771.8,399.1 784.8,396.8 797.9,395.2 810.9,394.5 823.9,394.5 833.7,395.5 841.5,396.8"/>
<g><text transform="translate(629.84,582.8) scale(0.8795,1)" font-family="'Liberation Serif', serif" font-weight="normal" font-size="13.5px" fill="#000" stroke="#000" stroke-width="0.18" xml:space="preserve">300</text><text transform="translate(671.17,582.8) scale(0.8627,1)" font-family="'Liberation Serif', serif" font-weight="normal" font-size="13.5px" fill="#000" stroke="#000" stroke-width="0.18" xml:space="preserve">400</text><text transform="translate(710.71,582.8) scale(0.8857,1)" font-family="'Liberation Serif', serif" font-weight="normal" font-size="13.5px" fill="#000" stroke="#000" stroke-width="0.18" xml:space="preserve">500</text><text transform="translate(750.90,582.8) scale(0.8764,1)" font-family="'Liberation Serif', serif" font-weight="normal" font-size="13.5px" fill="#000" stroke="#000" stroke-width="0.18" xml:space="preserve">600</text><text transform="translate(790.62,582.8) scale(0.8905,1)" font-family="'Liberation Serif', serif" font-weight="normal" font-size="13.5px" fill="#000" stroke="#000" stroke-width="0.18" xml:space="preserve">700</text><text transform="translate(831.96,582.8) scale(0.8733,1)" font-family="'Liberation Serif', serif" font-weight="normal" font-size="13.5px" fill="#000" stroke="#000" stroke-width="0.18" xml:space="preserve">800</text><text transform="translate(615.98,570.7) scale(0.8385,1)" font-family="'Liberation Serif', serif" font-weight="normal" font-size="13.5px" fill="#000" stroke="#000" stroke-width="0.18" xml:space="preserve">0.0</text><text transform="translate(615.97,552.7) scale(0.8548,1)" font-family="'Liberation Serif', serif" font-weight="normal" font-size="13.5px" fill="#000" stroke="#000" stroke-width="0.18" xml:space="preserve">0.1</text><text transform="translate(615.97,533.7) scale(0.8511,1)" font-family="'Liberation Serif', serif" font-weight="normal" font-size="13.5px" fill="#000" stroke="#000" stroke-width="0.18" xml:space="preserve">0.2</text><text transform="translate(615.97,514.7) scale(0.8402,1)" font-family="'Liberation Serif', serif" font-weight="normal" font-size="13.5px" fill="#000" stroke="#000" stroke-width="0.18" xml:space="preserve">0.3</text><text transform="translate(615.98,496.7) scale(0.8227,1)" font-family="'Liberation Serif', serif" font-weight="normal" font-size="13.5px" fill="#000" stroke="#000" stroke-width="0.18" xml:space="preserve">0.4</text><text transform="translate(615.97,477.7) scale(0.8402,1)" font-family="'Liberation Serif', serif" font-weight="normal" font-size="13.5px" fill="#000" stroke="#000" stroke-width="0.18" xml:space="preserve">0.5</text><text transform="translate(615.98,458.7) scale(0.8331,1)" font-family="'Liberation Serif', serif" font-weight="normal" font-size="13.5px" fill="#000" stroke="#000" stroke-width="0.18" xml:space="preserve">0.6</text><text transform="translate(615.98,439.7) scale(0.8314,1)" font-family="'Liberation Serif', serif" font-weight="normal" font-size="13.5px" fill="#000" stroke="#000" stroke-width="0.18" xml:space="preserve">0.7</text><text transform="translate(615.98,421.7) scale(0.8385,1)" font-family="'Liberation Serif', serif" font-weight="normal" font-size="13.5px" fill="#000" stroke="#000" stroke-width="0.18" xml:space="preserve">0.8</text><text transform="translate(615.97,402.7) scale(0.8402,1)" font-family="'Liberation Serif', serif" font-weight="normal" font-size="13.5px" fill="#000" stroke="#000" stroke-width="0.18" xml:space="preserve">0.9</text><text transform="translate(615.37,383.7) scale(0.8757,1)" font-family="'Liberation Serif', serif" font-weight="normal" font-size="13.5px" fill="#000" stroke="#000" stroke-width="0.18" xml:space="preserve">1.0</text><text transform="translate(739.50,598) scale(0.8677,1)" font-family="'Liberation Serif', serif" font-weight="normal" font-size="13.5px" fill="#000" stroke="#000" stroke-width="0.18" xml:space="preserve">Wavelength [nm]</text><text transform="translate(726.98,370) scale(0.9383,1)" font-family="'Liberation Serif', serif" font-weight="normal" font-size="13.5px" fill="#000" stroke="#000" stroke-width="0.18" xml:space="preserve">T Vis</text><text transform="translate(604.4,468.24) rotate(-90) scale(0.9256,1)" font-family="'Liberation Serif', serif" font-size="15px" fill="#000" stroke="#000" stroke-width="0.1">Transmittance</text></g>
</svg>
</div>
</body>
</html>
